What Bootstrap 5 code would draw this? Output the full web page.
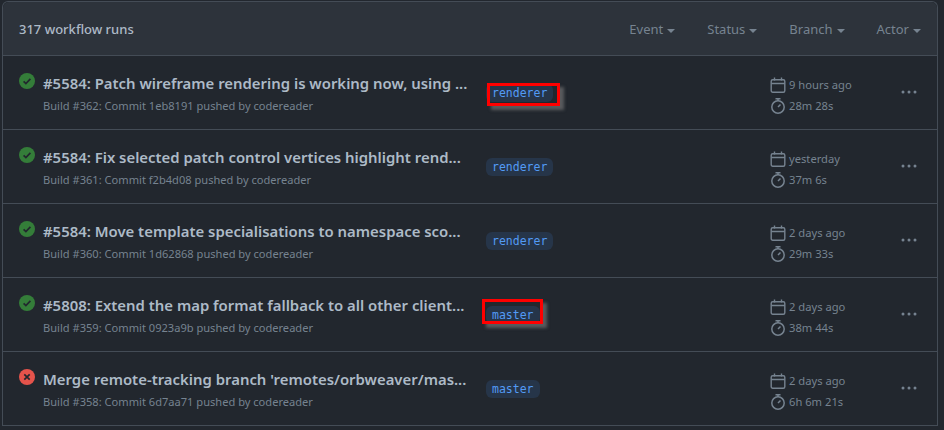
<!DOCTYPE html>
<html lang="en"><head><meta charset="utf-8"><title>Workflow runs</title>
<link href="https://cdn.jsdelivr.net/npm/bootstrap@5.3.0/dist/css/bootstrap.min.css" rel="stylesheet">
<style>
html,body{height:430px;overflow:hidden}
body{background:#22272e;font-family:"Noto Sans","Open Sans",sans-serif;color:#adbac7;padding:1px 6px 0 2px}
.runs-box{border:1px solid #444c56;border-bottom:0;border-radius:6px 6px 0 0;background:#22272e}
.runs-head{height:54px;background:#2d333b;border-bottom:1px solid #444c56;border-radius:6px 6px 0 0;padding:3px 16px 0 16px}
.runs-count{font-weight:500;color:#adbac7;font-size:13px}
.filter-item{color:#768390;font-size:13px;margin-left:32px;display:flex;align-items:center;gap:4px}
.caret-down{width:0;height:0;border-left:4px solid transparent;border-right:4px solid transparent;border-top:4px solid currentColor;margin-top:2px}
.run-row{height:74px;border-bottom:1px solid #444c56;position:relative}
.run-main{width:465px;padding:15px 0 0 16px;flex:none}
.run-title-line{font-weight:600;font-size:14.9px;line-height:24px;color:#adbac7;white-space:nowrap;padding-left:24px}
.run-meta{font-size:11.1px;color:#768390;line-height:18px;padding-left:24px;margin-top:2px}
.run-status{position:absolute;left:16px;top:17px;width:16px;height:16px}
.branch-col{width:302px;flex:none;padding:23px 0 0 18px}
.branch-pill{display:inline-block;font-family:"DejaVu Sans Mono","Liberation Mono",monospace;font-size:11.5px;line-height:18px;color:#539bf5;background:rgba(65,132,228,.15);border-radius:6px;padding:0 6px;position:relative}
.mark-box{position:absolute;border:3px solid #f00;box-shadow:4px 4px 3px rgba(118,118,118,.65);pointer-events:none}
.mark-a{left:1px;top:-1px;width:73px;height:23px}
.mark-b{left:-4px;top:-7px;width:61px;height:25px}
.time-col{width:131px;flex:none;padding-top:19px;font-size:11.2px;color:#768390}
.time-line{display:flex;align-items:center;gap:3px;height:20px}
.time-line + .time-line{margin-top:1px}
.time-line svg{flex:none}
.dots-col{padding-top:22px}
</style></head><body>
<div class="runs-box">
 <div class="runs-head d-flex align-items-center justify-content-between">
  <div class="runs-count">317 workflow runs</div>
  <div class="d-flex">
   <div class="filter-item">Event<span class="caret-down"></span></div>
   <div class="filter-item">Status<span class="caret-down"></span></div>
   <div class="filter-item">Branch<span class="caret-down"></span></div>
   <div class="filter-item">Actor<span class="caret-down"></span></div>
  </div>
 </div>

 <div class="run-row d-flex">
  <svg class="run-status" viewBox="0 0 16 16"><circle cx="8" cy="8" r="8" fill="#347d39"/><path d="M4.6 8.3l2.3 2.3 4.5-4.7" fill="none" stroke="#22272e" stroke-width="1.7"/></svg>
  <div class="run-main"><div class="run-title-line">#5584: Patch wireframe rendering is working now, using ...</div><div class="run-meta">Build #362: Commit 1eb8191 pushed by codereader</div></div>
  <div class="branch-col"><span class="branch-pill">renderer<span class="mark-box mark-a"></span></span></div>
  <div class="time-col"><div class="time-line"><svg width="16" height="16" viewBox="0 0 16 16" fill="none" stroke="#768390" stroke-width="1.4"><rect x="1.2" y="2.7" width="13.6" height="12.6" rx="1.5"/><path d="M1.2 6.5h13.6M4.5 .5v3M11.5 .5v3"/></svg>9 hours ago</div><div class="time-line"><svg width="16" height="16" viewBox="0 0 16 16" fill="none" stroke="#768390" stroke-width="1.5"><circle cx="8" cy="9" r="6.2"/><path d="M5.5 .8h5M8 1v2M8 9l2.5-2.5"/></svg>28m 28s</div></div>
  <div class="dots-col"><svg width="16" height="16" viewBox="0 0 16 16" fill="#768390"><circle cx="2" cy="8" r="1.5"/><circle cx="8" cy="8" r="1.5"/><circle cx="14" cy="8" r="1.5"/></svg></div>
 </div>

 <div class="run-row d-flex">
  <svg class="run-status" viewBox="0 0 16 16"><circle cx="8" cy="8" r="8" fill="#347d39"/><path d="M4.6 8.3l2.3 2.3 4.5-4.7" fill="none" stroke="#22272e" stroke-width="1.7"/></svg>
  <div class="run-main"><div class="run-title-line">#5584: Fix selected patch control vertices highlight rend...</div><div class="run-meta">Build #361: Commit f2b4d08 pushed by codereader</div></div>
  <div class="branch-col"><span class="branch-pill">renderer</span></div>
  <div class="time-col"><div class="time-line"><svg width="16" height="16" viewBox="0 0 16 16" fill="none" stroke="#768390" stroke-width="1.4"><rect x="1.2" y="2.7" width="13.6" height="12.6" rx="1.5"/><path d="M1.2 6.5h13.6M4.5 .5v3M11.5 .5v3"/></svg>yesterday</div><div class="time-line"><svg width="16" height="16" viewBox="0 0 16 16" fill="none" stroke="#768390" stroke-width="1.5"><circle cx="8" cy="9" r="6.2"/><path d="M5.5 .8h5M8 1v2M8 9l2.5-2.5"/></svg>37m 6s</div></div>
  <div class="dots-col"><svg width="16" height="16" viewBox="0 0 16 16" fill="#768390"><circle cx="2" cy="8" r="1.5"/><circle cx="8" cy="8" r="1.5"/><circle cx="14" cy="8" r="1.5"/></svg></div>
 </div>

 <div class="run-row d-flex">
  <svg class="run-status" viewBox="0 0 16 16"><circle cx="8" cy="8" r="8" fill="#347d39"/><path d="M4.6 8.3l2.3 2.3 4.5-4.7" fill="none" stroke="#22272e" stroke-width="1.7"/></svg>
  <div class="run-main"><div class="run-title-line">#5584: Move template specialisations to namespace sco...</div><div class="run-meta">Build #360: Commit 1d62868 pushed by codereader</div></div>
  <div class="branch-col"><span class="branch-pill">renderer</span></div>
  <div class="time-col"><div class="time-line"><svg width="16" height="16" viewBox="0 0 16 16" fill="none" stroke="#768390" stroke-width="1.4"><rect x="1.2" y="2.7" width="13.6" height="12.6" rx="1.5"/><path d="M1.2 6.5h13.6M4.5 .5v3M11.5 .5v3"/></svg>2 days ago</div><div class="time-line"><svg width="16" height="16" viewBox="0 0 16 16" fill="none" stroke="#768390" stroke-width="1.5"><circle cx="8" cy="9" r="6.2"/><path d="M5.5 .8h5M8 1v2M8 9l2.5-2.5"/></svg>29m 33s</div></div>
  <div class="dots-col"><svg width="16" height="16" viewBox="0 0 16 16" fill="#768390"><circle cx="2" cy="8" r="1.5"/><circle cx="8" cy="8" r="1.5"/><circle cx="14" cy="8" r="1.5"/></svg></div>
 </div>

 <div class="run-row d-flex">
  <svg class="run-status" viewBox="0 0 16 16"><circle cx="8" cy="8" r="8" fill="#347d39"/><path d="M4.6 8.3l2.3 2.3 4.5-4.7" fill="none" stroke="#22272e" stroke-width="1.7"/></svg>
  <div class="run-main"><div class="run-title-line">#5808: Extend the map format fallback to all other client...</div><div class="run-meta">Build #359: Commit 0923a9b pushed by codereader</div></div>
  <div class="branch-col"><span class="branch-pill">master<span class="mark-box mark-b"></span></span></div>
  <div class="time-col"><div class="time-line"><svg width="16" height="16" viewBox="0 0 16 16" fill="none" stroke="#768390" stroke-width="1.4"><rect x="1.2" y="2.7" width="13.6" height="12.6" rx="1.5"/><path d="M1.2 6.5h13.6M4.5 .5v3M11.5 .5v3"/></svg>2 days ago</div><div class="time-line"><svg width="16" height="16" viewBox="0 0 16 16" fill="none" stroke="#768390" stroke-width="1.5"><circle cx="8" cy="9" r="6.2"/><path d="M5.5 .8h5M8 1v2M8 9l2.5-2.5"/></svg>38m 44s</div></div>
  <div class="dots-col"><svg width="16" height="16" viewBox="0 0 16 16" fill="#768390"><circle cx="2" cy="8" r="1.5"/><circle cx="8" cy="8" r="1.5"/><circle cx="14" cy="8" r="1.5"/></svg></div>
 </div>

 <div class="run-row d-flex">
  <svg class="run-status" viewBox="0 0 16 16"><circle cx="8" cy="8" r="8" fill="#e5534b"/><path d="M5.3 5.3l5.4 5.4M10.7 5.3l-5.4 5.4" fill="none" stroke="#22272e" stroke-width="1.7"/></svg>
  <div class="run-main"><div class="run-title-line">Merge remote-tracking branch 'remotes/orbweaver/mas...</div><div class="run-meta">Build #358: Commit 6d7aa71 pushed by codereader</div></div>
  <div class="branch-col"><span class="branch-pill">master</span></div>
  <div class="time-col"><div class="time-line"><svg width="16" height="16" viewBox="0 0 16 16" fill="none" stroke="#768390" stroke-width="1.4"><rect x="1.2" y="2.7" width="13.6" height="12.6" rx="1.5"/><path d="M1.2 6.5h13.6M4.5 .5v3M11.5 .5v3"/></svg>2 days ago</div><div class="time-line"><svg width="16" height="16" viewBox="0 0 16 16" fill="none" stroke="#768390" stroke-width="1.5"><circle cx="8" cy="9" r="6.2"/><path d="M5.5 .8h5M8 1v2M8 9l2.5-2.5"/></svg>6h 6m 21s</div></div>
  <div class="dots-col"><svg width="16" height="16" viewBox="0 0 16 16" fill="#768390"><circle cx="2" cy="8" r="1.5"/><circle cx="8" cy="8" r="1.5"/><circle cx="14" cy="8" r="1.5"/></svg></div>
 </div>
</div>
<script src="https://cdn.jsdelivr.net/npm/bootstrap@5.3.0/dist/js/bootstrap.bundle.min.js"></script>
</body></html>
